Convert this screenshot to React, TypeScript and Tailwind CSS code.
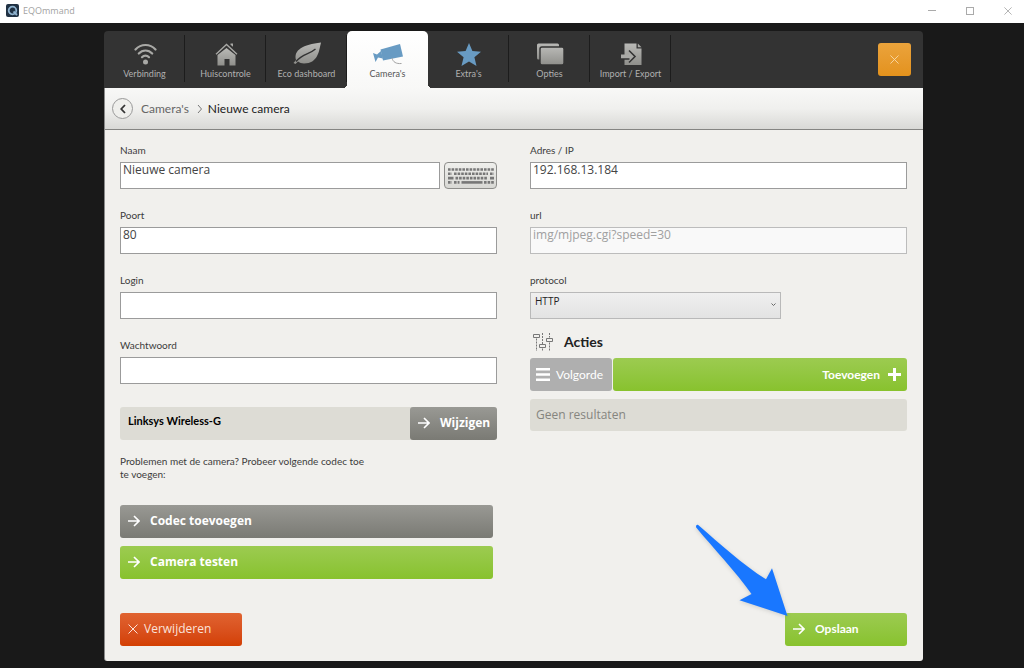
import { useState } from "react";
import type { ReactNode } from "react";
import clsx from "clsx";

const tabs: { label: string; icon: ReactNode }[] = [
  { label: "Verbinding", icon: <WifiIcon /> },
  { label: "Huiscontrole", icon: <HouseIcon /> },
  { label: "Eco dashboard", icon: <LeafIcon /> },
  { label: "Camera's", icon: <CameraIcon /> },
  { label: "Extra's", icon: <StarIcon /> },
  { label: "Opties", icon: <WindowsIcon /> },
  { label: "Import / Export", icon: <ImportIcon /> },
];

function Gradient({ id }: { id: string }) {
  return (
    <defs>
      <linearGradient id={id} x1="0" y1="0" x2="0" y2="1">
        <stop offset="0" stopColor="#b9b9b6" />
        <stop offset="1" stopColor="#8f8f8b" />
      </linearGradient>
    </defs>
  );
}

function WifiIcon() {
  return (
    <svg width="24" height="24" viewBox="0 0 24 24" fill="none" stroke="#a9a9a6" strokeWidth="2.2" strokeLinecap="round">
      <path d="M2.5 7.5C8 1.5 17 1.5 22.500 7.500" />
      <path d="M5.800 11.500C9.500 7.500 15.500 7.500 19.200 11.500" />
      <path d="M9 15.200C11 13 14 13 16 15.200" />
      <circle cx="12.500" cy="20" r="2.500" fill="#a9a9a6" stroke="none" />
    </svg>
  );
}

function HouseIcon() {
  return (
    <svg width="24" height="24" viewBox="0 0 24 24">
      <Gradient id="house" />
      <path d="M3.500 13 12.500 6l9 7v10.500h-6V17h-5v6.500h-7z" fill="url(#house)" />
      <path d="M2 12.200 12.500 2.500 23 12.200" fill="none" stroke="#a9a9a6" strokeWidth="1.300" />
      <path d="M16.500 1.500h2.500v3.200l-2.500-2z" fill="#a9a9a6" />
    </svg>
  );
}

function LeafIcon() {
  return (
    <svg width="28" height="24" viewBox="0 0 28 24">
      <Gradient id="leaf" />
      <path d="M28 .5C26 9 25 21.500 11 21.500c-2.500 0-4.500-.7-6-2L2.500 22 .5 21l2.500-3C.5 8 10 2.500 28 .5z" fill="url(#leaf)" />
      <path d="M3 19.500C9 12 17 12 22.500 7" fill="none" stroke="#333" strokeWidth="1.300" />
    </svg>
  );
}

function CameraIcon() {
  return (
    <svg width="32" height="24" viewBox="0 0 32 24">
      <path d="M8.500 7.500 28 2l3 12.500L11 18.500z" fill="#689bc3" />
      <path d="m1 11 4 1.500L9 9l2 7.500-5-1L3.500 20z" fill="#689bc3" />
      <path d="M20 16c1 4 4 6 9.500 5.500" fill="none" stroke="#a3a3a3" strokeWidth="1" />
    </svg>
  );
}

function StarIcon() {
  return (
    <svg width="26" height="24" viewBox="0 0 26 24">
      <path d="m13 1 3.400 8 8.600.7-6.600 5.600L20.500 24 13 19.500 5.500 24l2.100-8.700L1 9.700 9.600 9z" fill="#689bc3" />
    </svg>
  );
}

function WindowsIcon() {
  return (
    <svg width="28" height="24" viewBox="0 0 28 24">
      <Gradient id="windows" />
      <rect x="1" y="1.500" width="22" height="16" rx="1.500" fill="url(#windows)" />
      <rect x="4" y="5" width="24" height="18" rx="2" fill="url(#windows)" stroke="#333" strokeWidth="1.400" />
    </svg>
  );
}

function ImportIcon() {
  return (
    <svg width="24" height="24" viewBox="0 0 24 24">
      <Gradient id="import" />
      <path d="M5.500 1.500h12v5h5V23h-17z" fill="url(#import)" />
      <path d="m18.800 1.500 3.700 3.700h-3.700z" fill="#a9a9a6" />
      <path d="M2 12.500h8V8l6.500 6.500-6.500 6.500v-4H2z" fill="#a9a9a6" />
      <path d="M2 17h8.500M10 8.500l6 6-6 6" fill="none" stroke="#333" strokeWidth="1.600" />
    </svg>
  );
}

function ArrowIcon() {
  return (
    <svg width="12" height="12" viewBox="0 0 12 12" fill="none" stroke="currentColor" strokeWidth="1.600">
      <path d="M0 6h10.500M6 1l5 5-5 5" />
    </svg>
  );
}

function CrossIcon({ size }: { size: number }) {
  return (
    <svg width={size} height={size} viewBox="0 0 10 10" fill="none" stroke="currentColor" strokeWidth="1">
      <path d="m.5.5 9 9M9.500.5l-9 9" />
    </svg>
  );
}

function KeyboardIcon() {
  return (
    <svg width="46" height="18" viewBox="0 0 46 18" fill="none" stroke="#777" strokeWidth="2.600">
      <path d="M0 2.500h46" strokeDasharray="2.600 1" />
      <path d="M0 6.800h4M6 6.800h34M42 6.800h4" strokeDasharray="2.600 1" />
      <path d="M0 11.100h5.500M42 11.100h4" />
      <path d="M7.500 11.100h32" strokeDasharray="2.600 1" />
      <path d="M0 15.400h4M6 15.400h5.500M36 15.400h10" strokeDasharray="2.600 1" />
      <path d="M13.500 15.400h21" />
    </svg>
  );
}

function SlidersIcon() {
  return (
    <svg width="22" height="18" viewBox="0 0 22 18" fill="none" stroke="#777" strokeWidth="1">
      <path d="M4.500 5.500V18M10.500 0v11.500M10.500 15.500V18M17.500 0v4.500M17.500 9.500V18" strokeDasharray="2 1" />
      <path d="M1.500 1.500h6v3h-6zM7.500 11.500h6v3h-6zM14.500 5.500h6v3h-6z" />
    </svg>
  );
}

type FieldProps = {
  id: string;
  label: string;
  value?: string;
  type?: string;
  disabled?: boolean;
  children?: ReactNode;
};

const Field = ({ id, label, value = "", type = "text", disabled, children }: FieldProps) => (
  <div>
    <label htmlFor={id} className="block h-5 text-[10px] leading-4">
      {label}
    </label>
    <div className="flex gap-1">
      <input
        id={id}
        type={type}
        defaultValue={value}
        disabled={disabled}
        className={clsx(
          "h-[27px] min-w-0 flex-1 border px-[2px] pb-3 font-['Open_Sans',sans-serif] text-xs leading-3 outline-none",
          disabled ? "border-[#bcbcbc] bg-[#f9f9f9] text-[#a0a0a0]" : "border-[#9b9b9b] bg-white text-[#444]"
        )}
      />
      {children}
    </div>
  </div>
);

const grey = "bg-linear-to-b from-[#999994] to-[#7a7a74]";
const green = "bg-linear-to-b from-[#9ccb50] to-[#88c22d]";

const App = () => {
  const [active, setActive] = useState("Camera's");

  return (
    <div className="flex min-h-screen flex-col bg-[#191919] font-[Lato,sans-serif] text-[#3c3c3c]">
      <header className="flex h-[23px] items-center justify-between bg-white pr-3 pl-[6px] text-[#a2a2a2]">
        <div className="flex items-center gap-1 pb-[2px]">
          <svg width="13" height="13" viewBox="0 0 13 13">
            <rect width="13" height="13" rx="2" fill="#203143" />
            <circle cx="6.500" cy="6.500" r="3.800" fill="none" stroke="#8fb3cf" strokeWidth="1.800" />
            <path d="m7.500 7.500 3.500 3.500" stroke="#8fb3cf" strokeWidth="1.800" />
          </svg>
          <span className="font-['Open_Sans',sans-serif] text-[9px] leading-4">EQOmmand</span>
        </div>
        <div className="flex items-center gap-[30px] pb-[2px]">
          <button aria-label="Minimaliseren" className="h-px w-2 bg-[#aaa]" />
          <button aria-label="Maximaliseren" className="size-2 border border-[#aaa]" />
          <button aria-label="Sluiten">
            <CrossIcon size={8} />
          </button>
        </div>
      </header>

      <main className="flex flex-1 flex-col pt-2 pr-[101px] pb-[7px] pl-[104px]">
        <nav className="flex h-[57px] items-center justify-between rounded-t bg-[#333] pr-3">
          <div className="flex h-full">
            {tabs.map(({ label, icon }) => (
              <button
                key={label}
                onClick={() => setActive(label)}
                className={clsx(
                  "flex w-[81px] flex-col items-center pt-[11px] text-[9px] leading-4 whitespace-nowrap",
                  label === active
                    ? "relative rounded-t-[5px] bg-linear-to-b from-white to-[#f8f8f7] text-[#555] before:absolute before:bottom-0 before:-left-1 before:size-1 before:bg-[radial-gradient(circle_at_0_0,transparent_4px,#f8f8f7_4px)] after:absolute after:-right-1 after:bottom-0 after:size-1 after:bg-[radial-gradient(circle_at_100%_0,transparent_4px,#f8f8f7_4px)]"
                    : "text-[#b0b0b0] bg-[linear-gradient(#1c1c1c,#1c1c1c)] bg-[length:1px_47px] bg-[position:100%_4px] bg-no-repeat"
                )}
              >
                {icon}
                {label}
              </button>
            ))}
          </div>
          <button
            aria-label="Scherm sluiten"
            className="flex size-[33px] items-center justify-center rounded-[3px] bg-linear-to-b from-[#eba33b] to-[#e3921c] text-[#f8d9a8]"
          >
            <CrossIcon size={9} />
          </button>
        </nav>

        <section className="flex flex-1 flex-col rounded-b-[3px] border-l border-[#8a8a8a] bg-[#f1f0ed]">
          <div className="flex h-[42px] items-center border-b border-[#858582] bg-linear-to-b from-[#f8f8f7] via-[#f0f0ee] to-[#d9d9d6] pl-[7px] text-xs">
            <button
              aria-label="Terug"
              className="mr-2 flex size-[21px] items-center justify-center rounded-full border border-[#999] bg-[#efefec]"
            >
              <svg width="6" height="10" viewBox="0 0 6 10" fill="none" stroke="#333" strokeWidth="1.800">
                <path d="M5 1 1.200 5 5 9" />
              </svg>
            </button>
            <a href="#cameras" className="text-[#666]">
              Camera's
            </a>
            <svg className="mr-[5px] ml-2" width="6" height="10" viewBox="0 0 6 10" fill="none" stroke="#777">
              <path d="m1 1 3.500 4L1 9" />
            </svg>
            <span className="text-[#222]">Nieuwe camera</span>
          </div>

          <div className="grid grid-cols-2 gap-[33px] pt-3 pr-4 pl-[15px]">
            <div>
              <div className="flex flex-col gap-[18px]">
                <Field id="naam" label="Naam" value="Nieuwe camera">
                  <button
                    aria-label="Toetsenbord"
                    className="flex h-[27px] w-[53px] items-center justify-center rounded border border-[#8d8d8a] bg-linear-to-b from-[#efefec] to-[#d8d8d4]"
                  >
                    <KeyboardIcon />
                  </button>
                </Field>
                <Field id="poort" label="Poort" value="80" />
                <Field id="login" label="Login" />
                <Field id="wachtwoord" label="Wachtwoord" type="password" />
              </div>

              <div className="mt-[23px] flex h-[33px] rounded-[3px] bg-[#dddcd5]">
                <span className="flex-1 pt-[6px] pl-2 text-[11px] leading-4 font-bold text-black">
                  Linksys Wireless-G
                </span>
                <button
                  className={clsx(
                    "flex w-[87px] items-center gap-[10px] rounded-[3px] pb-[2px] pl-2 font-['Open_Sans',sans-serif] text-xs font-bold text-white",
                    grey
                  )}
                >
                  <ArrowIcon />
                  Wijzigen
                </button>
              </div>

              <p className="mt-[15px] max-w-[252px] text-[10px] leading-[13px]">
                Problemen met de camera? Probeer volgende codec toe te voegen:
              </p>

              <div className="mt-6 mr-1 flex flex-col gap-2 font-['Open_Sans',sans-serif] text-xs font-bold text-white">
                <button className={clsx("flex h-[33px] items-center gap-[10px] rounded-[3px] pb-[2px] pl-2", grey)}>
                  <ArrowIcon />
                  Codec toevoegen
                </button>
                <button className={clsx("flex h-[33px] items-center gap-[10px] rounded-[3px] pb-[2px] pl-2", green)}>
                  <ArrowIcon />
                  Camera testen
                </button>
              </div>
            </div>

            <div>
              <div className="flex flex-col gap-[18px]">
                <Field id="adres" label="Adres / IP" value="192.168.13.184" />
                <Field id="url" label="url" value="img/mjpeg.cgi?speed=30" disabled />
                <div>
                  <label htmlFor="protocol" className="block h-5 text-[10px] leading-4">
                    protocol
                  </label>
                  <div className="relative w-2/3">
                    <select
                      id="protocol"
                      className="block h-[27px] w-full appearance-none border border-[#b9b9b9] bg-linear-to-b from-[#efefef] to-[#e3e3e3] pb-2 pl-1 font-['Open_Sans',sans-serif] text-[10px] text-[#222] outline-none"
                    >
                      <option>HTTP</option>
                      <option>HTTPS</option>
                    </select>
                    <svg
                      className="pointer-events-none absolute right-[5px] bottom-3"
                      width="5"
                      height="4"
                      viewBox="0 0 5 4"
                      fill="none"
                      stroke="#666"
                    >
                      <path d="m.5.5 2 2 2-2" />
                    </svg>
                  </div>
                </div>
              </div>

              <h2 className="mt-[13px] flex h-5 items-center gap-[10px] pl-[2px] text-sm font-bold text-[#222]">
                <SlidersIcon />
                Acties
              </h2>
              <div className="mt-[6px] flex h-[33px] gap-px text-xs text-white">
                <button className="flex w-[82px] items-center gap-[6px] rounded-[3px] bg-[#afafaf] pl-[6px]">
                  <svg width="14" height="13" viewBox="0 0 14 13" fill="currentColor">
                    <path d="M0 0h14v2.600H0zM0 5.200h14v2.600H0zM0 10.400h14V13H0z" />
                  </svg>
                  Volgorde
                </button>
                <button
                  className={clsx(
                    "flex flex-1 items-center justify-end gap-2 rounded-[3px] pr-[6px] font-bold",
                    green
                  )}
                >
                  Toevoegen
                  <svg width="13" height="13" viewBox="0 0 13 13" stroke="currentColor" strokeWidth="3">
                    <path d="M0 6.500h13M6.500 0v13" />
                  </svg>
                </button>
              </div>
              <div className="mt-2 h-8 rounded-[3px] bg-[#dddcd5] pl-[6px] font-['Open_Sans',sans-serif] text-xs leading-8 text-[#85857f]">
                Geen resultaten
              </div>
            </div>
          </div>

          <div className="mt-auto flex justify-between pr-4 pb-[15px] pl-[15px] text-xs">
            <button className="flex h-[33px] w-[122px] items-center gap-[6px] rounded-[3px] bg-linear-to-b from-[#e06330] to-[#d33f02] pb-[2px] pl-2 font-['Open_Sans',sans-serif] text-[#fbe3da]">
              <CrossIcon size={10} />
              Verwijderen
            </button>
            <div className="relative">
              <button
                className={clsx(
                  "flex h-[33px] w-[122px] items-center gap-[10px] rounded-[3px] pb-[2px] pl-2 font-bold text-white",
                  green
                )}
              >
                <ArrowIcon />
                Opslaan
              </button>
              {/* pointer towards the save button */}
              <svg
                className="pointer-events-none absolute -top-[91px] -left-[91px] drop-shadow-sm"
                width="96"
                height="98"
                viewBox="0 0 96 98"
                fill="#1977ff"
              >
                <path d="M4.500 3.200C26 22 48 42 72 57.300L78 46.300 93.500 94 45.500 78.300 57.500 72C42 50 20 27 2.200 5.500 1.500 3.500 3 2 4.500 3.200z" />
              </svg>
            </div>
          </div>
        </section>
      </main>
    </div>
  );
};

export default App;
